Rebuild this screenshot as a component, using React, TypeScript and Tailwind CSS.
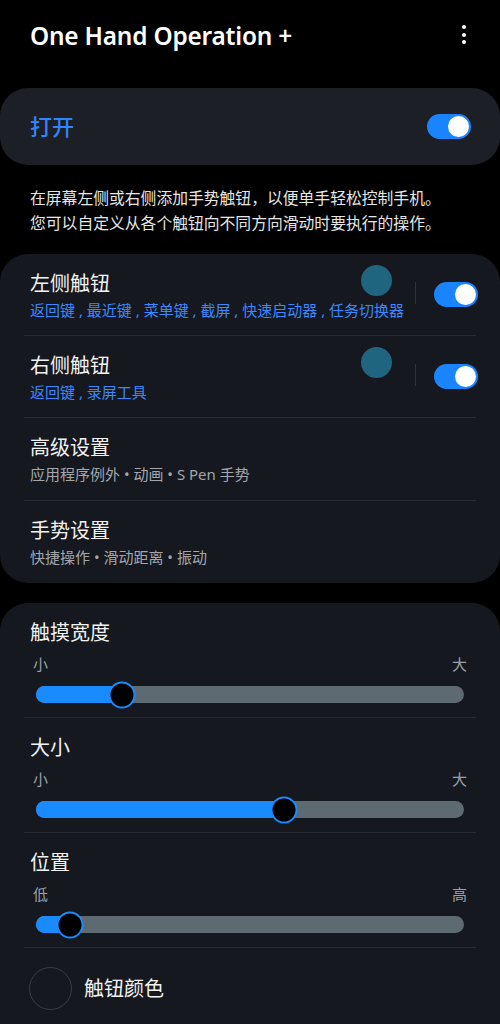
import React from "react";

const FONT = { fontFamily: '"Noto Sans", "Noto Sans CJK SC", sans-serif' };

function Toggle() {
  return (
    <div className="flex h-[25px] w-[44px] items-center justify-end rounded-full bg-[#1a84ff] pr-[2px]">
      <div className="h-[21px] w-[21px] rounded-full bg-white" />
    </div>
  );
}

function Divider() {
  return <div className="mx-[24px] h-px bg-[#262a31]" />;
}

function ButtonRow({ title, sub }: { title: string; sub: string }) {
  return (
    <div className="flex h-[81px] items-start pl-[30px] pr-[22px]">
      <div className="min-w-0 flex-1 pt-[16px]">
        <div className="text-[20px] leading-[28px] text-[#f2f2f2]">{title}</div>
        <div className="mt-[2px] overflow-visible whitespace-nowrap text-[15px] leading-[20px] text-[#3c88ff]">{sub}</div>
      </div>
      <div className="mt-[11px] h-[31px] w-[31px] shrink-0 rounded-full bg-[#1f6580]" />
      <div className="ml-[23px] mt-[28px] h-[22px] w-px shrink-0 bg-[#2e323a]" />
      <div className="ml-[18px] mt-[28px] shrink-0">
        <Toggle />
      </div>
    </div>
  );
}

function TextRow({ title, sub }: { title: string; sub: string }) {
  return (
    <div className="flex h-[82px] flex-col pl-[30px] pt-[16px]">
      <div className="text-[20px] leading-[28px] text-[#f2f2f2]">{title}</div>
      <div className="mt-[2px] text-[15px] leading-[20px] text-[#a3a7ad]">{sub}</div>
    </div>
  );
}

function SliderRow({ title, lo, hi, pct }: { title: string; lo: string; hi: string; pct: number }) {
  return (
    <div className="flex h-[114px] flex-col px-[36px] pt-[16px]">
      <div className="-ml-[6px] text-[20px] leading-[28px] text-[#f2f2f2]">{title}</div>
      <div className="mt-[7px] flex justify-between text-[15px] leading-[20px] text-[#9da2a8]">
        <span className="-ml-[3px]">{lo}</span>
        <span className="-mr-[3px]">{hi}</span>
      </div>
      <div className="relative mt-[12px] h-[17px] w-full rounded-full bg-[#5e6a72]">
        <div className="h-full rounded-full bg-[#1a8bff]" style={{ width: `${pct}%` }} />
        <div
          className="absolute top-1/2 h-[27px] w-[27px] -translate-x-1/2 -translate-y-1/2 rounded-full border-2 border-[#1a8bff] bg-black"
          style={{ left: `${pct}%` }}
        />
      </div>
    </div>
  );
}

export default function App() {
  return (
    <div className="min-h-[1024px] w-[500px] overflow-hidden bg-black" style={FONT}>
      <div className="flex h-[88px] items-start justify-between pl-[30px] pr-[34px] pt-[19px]">
        <div className="text-[24.4px] font-semibold leading-[34px] tracking-[-0.2px] text-white">One Hand Operation +</div>
        <div className="mt-[6px] flex flex-col items-center gap-[3.5px]">
          <div className="h-[4px] w-[4px] rounded-full bg-white" />
          <div className="h-[4px] w-[4px] rounded-full bg-white" />
          <div className="h-[4px] w-[4px] rounded-full bg-white" />
        </div>
      </div>

      <div className="flex h-[77px] items-center justify-between rounded-[28px] bg-[#1c1f25] pl-[30px] pr-[29px]">
        <div className="text-[22px] font-medium text-[#2f84ff]">打开</div>
        <Toggle />
      </div>

      <div className="px-[30px] pb-[18px] pt-[21px] text-[15.8px] leading-[25px] text-[#e6e6e6]">
        <div className="whitespace-nowrap">在屏幕左侧或右侧添加手势触钮，以便单手轻松控制手机。</div>
        <div className="whitespace-nowrap">您可以自定义从各个触钮向不同方向滑动时要执行的操作。</div>
      </div>

      <div className="rounded-[28px] bg-[#15181e]">
        <ButtonRow title="左侧触钮" sub="返回键 , 最近键 , 菜单键 , 截屏 , 快速启动器 , 任务切换器" />
        <Divider />
        <ButtonRow title="右侧触钮" sub="返回键 , 录屏工具" />
        <Divider />
        <TextRow title="高级设置" sub="应用程序例外 • 动画 • S Pen 手势" />
        <Divider />
        <TextRow title="手势设置" sub="快捷操作 • 滑动距离 • 振动" />
      </div>

      <div className="mt-[20px] rounded-t-[28px] bg-[#15181e] pb-[40px]">
        <SliderRow title="触摸宽度" lo="小" hi="大" pct={20} />
        <Divider />
        <SliderRow title="大小" lo="小" hi="大" pct={58} />
        <Divider />
        <SliderRow title="位置" lo="低" hi="高" pct={8} />
        <Divider />
        <div className="flex items-center gap-[12px] pl-[29px] pt-[19px]">
          <div className="h-[43px] w-[43px] rounded-full border-[1.5px] border-[#3a3d43]" />
          <div className="text-[20px] text-[#f2f2f2]">触钮颜色</div>
        </div>
      </div>
    </div>
  );
}
